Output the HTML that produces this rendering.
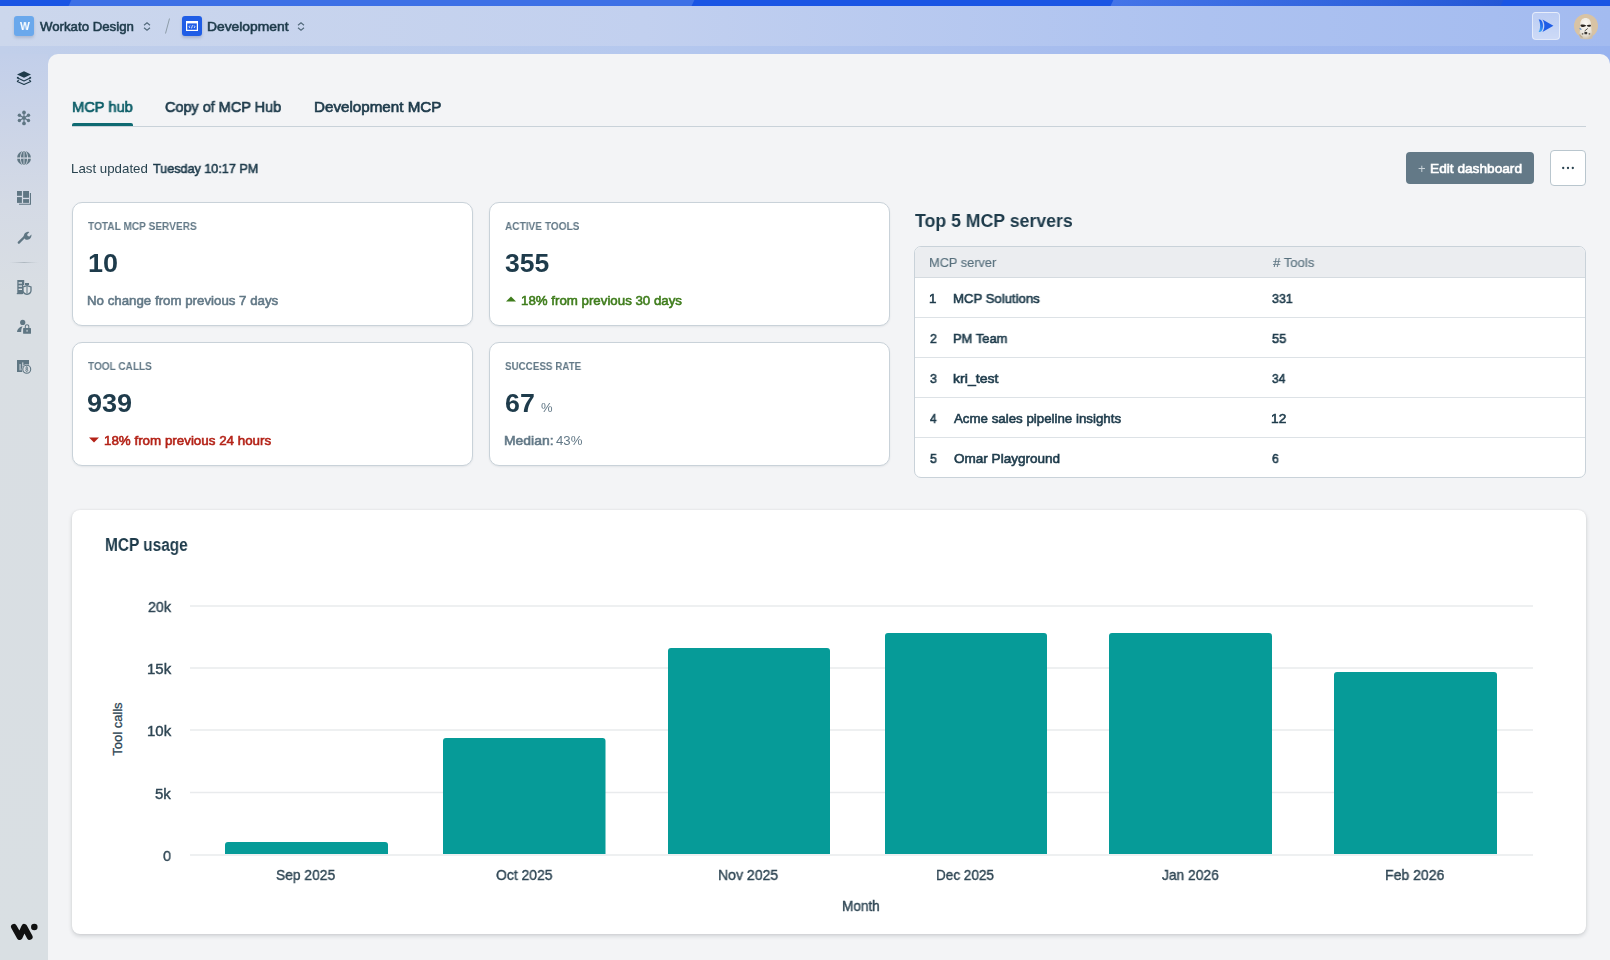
<!DOCTYPE html>
<html><head><meta charset="utf-8">
<style>
*{box-sizing:border-box;margin:0;padding:0}
html,body{width:1610px;height:960px;overflow:hidden}
body{position:relative;font-family:"Liberation Sans",sans-serif;color:#1e3b4b;
background:linear-gradient(180deg,#c3d0ea 0px,#cdd6e6 250px,#d9dfe3 450px,#d9dfe3 960px)}
.t{position:absolute;line-height:1;white-space:nowrap;transform-origin:0 0;will-change:transform}
.b{font-weight:700}
#topbar{position:absolute;left:0;top:0;width:1610px;height:6px;background:#1a55e4;overflow:hidden}
#topbar i{position:absolute;top:0;height:6px;display:block;transform:skewX(-25deg)}
#hdr{position:absolute;left:0;top:6px;width:1610px;height:48px;
background:linear-gradient(90deg,#ccd7ec 0%,#c2d0ef 40%,#adc2f0 75%,#a3bbf0 100%)}
#hdr2{position:absolute;left:0;top:46px;width:1610px;height:30px;
background:linear-gradient(90deg,#c1cfea 0%,#b5c8ee 40%,#a2b9ee 75%,#98b3ef 100%)}
#side{position:absolute;left:0;top:54px;width:48px;height:906px;background:linear-gradient(180deg,#c2cfea 0px,#cbd4e7 70px,#d4dae5 150px,#d9dee3 240px,#d9dfe3 906px)}
#main{position:absolute;left:48px;top:54px;width:1562px;height:906px;background:#f3f4f6;border-radius:10px 10px 0 0}
.card{position:absolute;background:#fff;border:1px solid #c9d2d9;border-radius:10px;box-shadow:0 1px 2px rgba(30,50,70,.08)}
.lbl{font-size:11px;font-weight:700;color:#637987;letter-spacing:0}
.big{font-size:26px;font-weight:700;color:#1e3b4b}
.sub{font-size:13.4px;font-weight:700;color:#637987}
</style></head><body>
<div id="topbar">
  <i style="left:70px;width:623px;background:#3d70e6"></i>
  <i style="left:1112px;width:390px;background:linear-gradient(90deg,#4474e8,#2f62dc 70%,#2457d6)"></i>
</div>
<div id="hdr"></div>
<div id="hdr2"></div>
<div id="side"></div>
<div id="main"></div>

<!-- header breadcrumb -->
<div style="position:absolute;left:14px;top:16px;width:20px;height:20px;border-radius:3px;background:#6aa8ec;box-shadow:0 2px 3px rgba(30,50,90,.18)"></div>
<svg style="position:absolute;left:143px;top:22px" width="8" height="9" viewBox="0 0 8 9"><path d="M1 3.2 4 0.8 7 3.2M1 5.8 4 8.2 7 5.8" fill="none" stroke="#51687a" stroke-width="1.1"/></svg>
<svg style="position:absolute;left:164px;top:18px" width="7" height="16" viewBox="0 0 7 16"><path d="M5.5 0.5 1.5 15.5" stroke="#8d9ca8" stroke-width="1"/></svg>
<div style="position:absolute;left:182px;top:16px;width:20px;height:20px;border-radius:3px;background:#1f5de6;box-shadow:0 2px 3px rgba(30,50,90,.2)"></div>
<svg style="position:absolute;left:186px;top:21px" width="12" height="10" viewBox="0 0 12 10"><rect x="0.6" y="0.6" width="10.8" height="8.8" fill="none" stroke="#fff" stroke-width="1.2"/><rect x="0" y="0" width="12" height="2.4" fill="#fff"/><path d="M4 4.5 3 5.8 4 7M8 4.5 9 5.8 8 7M6.5 4.2 5.5 7.4" fill="none" stroke="#fff" stroke-width="0.8"/></svg>
<svg style="position:absolute;left:297px;top:22px" width="8" height="9" viewBox="0 0 8 9"><path d="M1 3.2 4 0.8 7 3.2M1 5.8 4 8.2 7 5.8" fill="none" stroke="#51687a" stroke-width="1.1"/></svg>

<!-- header right -->
<div style="position:absolute;left:1532px;top:12px;width:28px;height:28px;border-radius:4px;background:linear-gradient(180deg,rgba(255,255,255,.25),rgba(255,255,255,.45));border:1px solid rgba(255,255,255,.55)"></div>
<svg style="position:absolute;left:1536px;top:16px" width="20" height="20" viewBox="0 0 20 20">
 <defs><linearGradient id="g1" x1="0" y1="1" x2="0.3" y2="0"><stop offset="0" stop-color="#3fb0f7"/><stop offset="0.6" stop-color="#2a78ee"/><stop offset="1" stop-color="#1f5de6"/></linearGradient></defs>
 <path d="M2.6 3.6C4.2 3.6 4.9 3.9 5.4 4.4 6.6 5.8 7 7.8 7 9.8S6.6 13.8 5.4 15.3C4.9 15.8 4.2 16 2.6 16 3.6 14.4 4.1 12.2 4.1 9.8S3.6 5.2 2.6 3.6Z" fill="url(#g1)"/>
 <path d="M6.4 3.6 17.4 9.8 6.4 16C7.7 14.2 8.3 12.1 8.3 9.8S7.7 5.4 6.4 3.6Z" fill="#1f5de6"/>
</svg>

<!-- tabs -->
<div style="position:absolute;left:72px;top:126px;width:1514px;height:1px;background:#c9d2d9"></div>
<div style="position:absolute;left:72px;top:123px;width:61px;height:3px;border-radius:2px 2px 0 0;background:#0f6a72"></div>

<!-- last updated -->

<!-- buttons -->
<div style="position:absolute;left:1406px;top:152px;width:128px;height:32px;border-radius:4px;background:#637987"></div>
<div style="position:absolute;left:1550px;top:150px;width:36px;height:36px;border-radius:4px;background:#fff;border:1px solid #b9c6ce"></div>
<svg style="position:absolute;left:1561px;top:166px" width="14" height="4" viewBox="0 0 14 4"><circle cx="2.2" cy="2" r="1.15" fill="#2a4350"/><circle cx="7" cy="2" r="1.15" fill="#2a4350"/><circle cx="11.8" cy="2" r="1.15" fill="#2a4350"/></svg>

<!-- KPI cards -->
<div class="card" style="left:72px;top:202px;width:401px;height:124px"></div>
<div class="card" style="left:489px;top:202px;width:401px;height:124px"></div>
<div class="card" style="left:72px;top:342px;width:401px;height:124px"></div>
<div class="card" style="left:489px;top:342px;width:401px;height:124px"></div>


<!-- KPI content -->

<svg style="position:absolute;left:505px;top:295px" width="12" height="8" viewBox="0 0 12 8"><path d="M1 6.5 6 1.5 11 6.5Z" fill="#3f7d1c"/></svg>

<svg style="position:absolute;left:88px;top:436px" width="12" height="8" viewBox="0 0 12 8"><path d="M1 1.5 6 6.5 11 1.5Z" fill="#b42318"/></svg>


<!-- Top 5 -->
<div style="position:absolute;left:914px;top:246px;width:672px;height:232px;border:1px solid #c9d2d9;border-radius:7px;background:#fff;overflow:hidden">
  <div style="position:absolute;left:0;top:0;width:100%;height:31px;background:#ebedf0;border-bottom:1px solid #d5dbe0"></div>
  <div style="position:absolute;left:0;top:70px;width:100%;height:1px;background:#dde2e6"></div>
  <div style="position:absolute;left:0;top:110px;width:100%;height:1px;background:#dde2e6"></div>
  <div style="position:absolute;left:0;top:150px;width:100%;height:1px;background:#dde2e6"></div>
  <div style="position:absolute;left:0;top:190px;width:100%;height:1px;background:#dde2e6"></div>
</div>

<!-- chart card -->
<div style="position:absolute;left:72px;top:510px;width:1514px;height:424px;border-radius:8px;background:#fff;box-shadow:0 2px 4px rgba(20,30,40,.16),0 0 2px rgba(20,30,40,.08)"></div>
<svg style="position:absolute;left:0;top:0" width="1610" height="960" viewBox="0 0 1610 960">
 <g stroke="#e9ebed" stroke-width="1.6">
  <line x1="190" y1="606" x2="1533" y2="606"/>
  <line x1="190" y1="668" x2="1533" y2="668"/>
  <line x1="190" y1="730" x2="1533" y2="730"/>
  <line x1="190" y1="792.5" x2="1533" y2="792.5"/>
  <line x1="190" y1="855" x2="1533" y2="855"/>
 </g>
 <g fill="#069b98">
  <path d="M225 854V845Q225 842 228 842H385Q388 842 388 845V854Z"/>
  <path d="M443 854V741Q443 738 446 738H602.5Q605.5 738 605.5 741V854Z"/>
  <path d="M668 854V651Q668 648 671 648H827Q830 648 830 651V854Z"/>
  <path d="M885 854V636Q885 633 888 633H1044Q1047 633 1047 636V854Z"/>
  <path d="M1109 854V636Q1109 633 1112 633H1269Q1272 633 1272 636V854Z"/>
  <path d="M1334 854V675Q1334 672 1337 672H1494Q1497 672 1497 675V854Z"/>
 </g>
</svg>


<!-- sidebar icons -->
<svg style="position:absolute;left:0;top:60px" width="48" height="330" viewBox="0 60 48 330">
 <path d="M24 71.2 31 74.5 24 77.7 17 74.5Z" fill="#1e3b4b"/>
 <g fill="#1e3b4b"><rect x="16.9" y="76.9" width="1.7" height="1.7"/><rect x="29.4" y="76.9" width="1.7" height="1.7"/></g>
 <g fill="none" stroke="#1e3b4b" stroke-width="1.1" stroke-linejoin="round">
  <path d="M17.8 78 24 80.9 30.2 78"/>
  <path d="M18.8 79.8 17.3 81.4 24 84.5 30.7 81.4 29.2 79.8"/>
 </g>
 <g fill="#5f7683" stroke="#5f7683" stroke-width="1.1">
  <path d="M24 112.4V123.4M19.4 115.25 28.5 120.5M19.4 120.5 28.5 115.25" />
  <circle cx="24" cy="117.9" r="1.9" stroke="none"/>
  <circle cx="24" cy="112.4" r="1.85" stroke="none"/><circle cx="24" cy="123.4" r="1.85" stroke="none"/>
  <circle cx="19.4" cy="115.25" r="1.7" stroke="none"/><circle cx="28.5" cy="115.25" r="1.7" stroke="none"/>
  <circle cx="19.4" cy="120.5" r="1.7" stroke="none"/><circle cx="28.5" cy="120.5" r="1.7" stroke="none"/>
 </g>
 <circle cx="24" cy="158" r="7" fill="#5f7683"/>
 <g fill="none" stroke="#d5dbe5">
  <ellipse cx="24" cy="158" rx="3.6" ry="7.4" stroke-width="0.9"/>
  <path d="M16.5 158.1H31.5" stroke-width="1.3"/>
 </g>
 <path d="M24 151.6V164.4" stroke="#b4bfca" stroke-width="1.2"/>
 <g fill="#5f7683">
  <rect x="17" y="191" width="4.9" height="4.8"/>
  <rect x="23.1" y="191" width="5.9" height="6.8"/>
  <rect x="17" y="197.1" width="4.9" height="5.8"/>
  <rect x="23.1" y="199.1" width="5.9" height="3.8"/>
  <path d="M29.9 193H31V204.8H19V203.8H29.9Z"/>
 </g>
 <g fill="none" stroke="#5f7683" stroke-linecap="round">
  <path d="M18.8 242.6 25.2 236.2" stroke-width="2.3"/>
  <path d="M24.4 237.2A3.6 3.6 0 1 1 29.2 232.2L27.3 234.1 27.8 235.7 29.4 236.2 31 234.4" stroke-width="0" />
 </g>
 <path fill="#5f7683" d="M23.9 237.6C23.2 235.3 24.6 232.3 27.3 231.9C28 231.8 28.7 231.9 29.3 232.2L27.2 234.3 27.6 236.1 29.4 236.5 31.4 234.4C31.8 236.9 30 239.4 27.5 239.7C26.7 239.8 26 239.7 25.4 239.4Z"/>
 <defs><linearGradient id="dv" gradientUnits="userSpaceOnUse" x1="9" y1="0" x2="39" y2="0"><stop offset="0" stop-color="#c0c8cf" stop-opacity="0"/><stop offset="0.5" stop-color="#adb7bf"/><stop offset="1" stop-color="#c0c8cf" stop-opacity="0"/></linearGradient></defs><path d="M9 262.5H39" stroke="url(#dv)" stroke-width="1"/>
 <g fill="#5f7683">
  <path d="M17.3 280H24.2V285.3H23V294H17.3Z"/>
  <path d="M16.8 293H22.5V294.2H16.8Z"/>
  <path d="M25 283H29V285H25Z"/>
 </g>
 <g fill="#dde2e6"><rect x="18.6" y="282.2" width="3.4" height="1.4"/><rect x="18.6" y="285.4" width="3.4" height="1.4"/><rect x="18.6" y="288.6" width="3.4" height="1.4"/></g>
 <path d="M27 285.6 31 287V290.4C31 292.4 29.3 293.8 27 294.4C24.7 293.8 23 292.4 23 290.4V287Z" fill="#dde2e6" stroke="#5f7683" stroke-width="1.3"/>
 <path d="M27 286.4V293.6" stroke="#5f7683" stroke-width="1"/>
 <g fill="#5f7683">
  <circle cx="22.7" cy="322.4" r="2.6"/>
  <path d="M17 332C17.2 329.2 19 327 22.6 326.2 21.6 327.8 21.2 329.6 21.2 332Z"/>
  <rect x="23.1" y="328" width="7.9" height="5.8" rx="0.6"/>
 </g>
 <path d="M25.3 328.4V326.4A1.75 1.75 0 0 1 28.8 326.4V328.4" fill="none" stroke="#5f7683" stroke-width="1.05"/>
 <rect x="26.5" y="329.8" width="1.1" height="1.9" fill="#d6dce2"/>
 <g fill="#5f7683"><rect x="17" y="360" width="12" height="12"/></g>
 <g fill="#b9c3cb"><rect x="19.4" y="364" width="1.4" height="6.4"/><rect x="22" y="362.4" width="1.4" height="4"/></g>
 <circle cx="26.75" cy="369.25" r="5.1" fill="#d8dde2"/>
 <circle cx="26.75" cy="369.25" r="3.95" fill="none" stroke="#5f7683" stroke-width="1.1"/>
 <g fill="none" stroke="#5f7683" stroke-width="0.85"><circle cx="26.75" cy="368.1" r="0.95"/><circle cx="26.75" cy="370.3" r="1.05"/><path d="M26.75 366.3V367M26.75 371.5V372.2"/></g>
</svg>
<!-- workato logo -->
<svg style="position:absolute;left:0;top:910px" width="48" height="40" viewBox="0 910 48 40">
 <path d="M13.96 926.9 19.65 937 24.26 926.9 29.7 937" fill="none" stroke="#111" stroke-width="5.9" stroke-linecap="round" stroke-linejoin="round"/>
 <circle cx="34.3" cy="926.9" r="3.25" fill="#111"/>
</svg>
<!-- avatar -->
<svg style="position:absolute;left:1574px;top:14px" width="24" height="26" viewBox="0 0 24 26">
 <defs><clipPath id="avc"><path d="M0 12A12 12 0 0 1 24 12V26H0Z"/></clipPath>
 <radialGradient id="hel" cx="0.45" cy="0.3" r="0.7"><stop offset="0" stop-color="#fbfaf7"/><stop offset="0.7" stop-color="#e9e4da"/><stop offset="1" stop-color="#cdbfa8"/></radialGradient></defs>
 <circle cx="12" cy="12" r="12" fill="#d8c3a4"/>
 <g clip-path="url(#avc)">
  <path d="M6.2 10.5C6.2 6 8.6 4 11.6 4S17 6 17 10.5L17.6 16.5C18.6 19 19.2 21.5 18.2 24.5 16 25.6 9 25.6 6 24.5 4.8 21.5 5.2 19 6 16.5Z" fill="url(#hel)"/>
  <path d="M6.3 11C8.5 10.2 10.4 10.4 12.2 11.6 10.8 13.4 8.6 13.3 7 12.4ZM17 11C15.4 10.4 13.8 10.6 12.6 11.6 13.6 13 15.6 13.2 16.8 12.2Z" fill="#2a2622"/>
  <path d="M13.8 14.4 10.6 17" stroke="#4a4640" stroke-width="0.9"/>
  <path d="M5.6 14.2 7.4 15.6" stroke="#5d8fc8" stroke-width="1.2"/>
  <path d="M10.2 18.6C11 17.6 12.6 17.6 13.4 18.6L13 20.2H10.6Z" fill="#3c3834"/>
  <circle cx="8.6" cy="19.8" r="0.9" fill="#6d655a"/><circle cx="15.4" cy="19.8" r="0.9" fill="#6d655a"/>
  <path d="M5.5 20.5C6.5 22 7.5 23 8.5 23.5" stroke="#b9a88e" stroke-width="1.2" fill="none"/>
 </g>
</svg>
<div id="toolcalls" style="position:absolute;left:90.75px;top:722.8px;width:54px;height:14px;line-height:14px;text-align:center;font-size:13.6px;white-space:nowrap;color:#2f4654;-webkit-text-stroke:0.3px #2f4654;transform:rotate(-90deg) scaleX(0.955);transform-origin:50% 50%">Tool calls</div>

<div class="t" style="left:20.2px;top:21.07px;font-size:11.5px;font-weight:700;color:#fff;transform:scaleX(0.9);">W</div>
<div class="t" style="left:40.2px;top:19.8px;font-size:13px;font-weight:400;color:#1e3b4b;transform:scaleX(1.0174);-webkit-text-stroke:0.58px #1e3b4b">Workato Design</div>
<div class="t" style="left:207.4px;top:19.8px;font-size:13px;font-weight:400;color:#1e3b4b;transform:scaleX(1.064);-webkit-text-stroke:0.58px #1e3b4b">Development</div>
<div class="t" style="left:71.6px;top:98.93px;font-size:15.2px;font-weight:400;color:#0b5d67;transform:scaleX(0.9646);-webkit-text-stroke:0.68px #0b5d67">MCP hub</div>
<div class="t" style="left:165.4px;top:98.93px;font-size:15.2px;font-weight:400;color:#1e3b4b;transform:scaleX(0.9508);-webkit-text-stroke:0.68px #1e3b4b">Copy of MCP Hub</div>
<div class="t" style="left:314.0px;top:98.93px;font-size:15.2px;font-weight:400;color:#1e3b4b;-webkit-text-stroke:0.68px #1e3b4b">Development MCP</div>
<div class="t" style="left:71.2px;top:161.63px;font-size:13.2px;font-weight:400;color:#29434f;transform:scaleX(1.008);">Last updated</div>
<div class="t" style="left:153.0px;top:161.63px;font-size:13.2px;font-weight:400;color:#1e3b4b;transform:scaleX(0.9545);-webkit-text-stroke:0.59px #1e3b4b">Tuesday 10:17 PM</div>
<div class="t" style="left:1417.6px;top:161.8px;font-size:13px;font-weight:400;color:#c9d3d9;">+</div>
<div class="t" style="left:1429.6px;top:162.37px;font-size:13.5px;font-weight:400;color:#fff;transform:scaleX(1.0134);-webkit-text-stroke:0.61px #fff">Edit dashboard</div>
<div class="t" style="left:88.0px;top:220.52px;font-size:11.2px;font-weight:700;color:#637987;transform:scaleX(0.9042);">TOTAL MCP SERVERS</div>
<div class="t" style="left:87.6px;top:251.21px;font-size:25.5px;font-weight:700;color:#1e3b4b;transform:scaleX(1.058);">10</div>
<div class="t" style="left:87.0px;top:293.83px;font-size:13.2px;font-weight:400;color:#637987;transform:scaleX(1.0074);-webkit-text-stroke:0.59px #637987">No change from previous 7 days</div>
<div class="t" style="left:505.0px;top:220.52px;font-size:11.2px;font-weight:700;color:#637987;transform:scaleX(0.9024);">ACTIVE TOOLS</div>
<div class="t" style="left:504.8px;top:251.21px;font-size:25.5px;font-weight:700;color:#1e3b4b;transform:scaleX(1.0409);">355</div>
<div class="t" style="left:520.6px;top:293.83px;font-size:13.2px;font-weight:400;color:#3f7d1c;transform:scaleX(1.0076);-webkit-text-stroke:0.59px #3f7d1c">18% from previous 30 days</div>
<div class="t" style="left:87.8px;top:360.52px;font-size:11.2px;font-weight:700;color:#637987;transform:scaleX(0.8987);">TOOL CALLS</div>
<div class="t" style="left:86.8px;top:391.21px;font-size:25.5px;font-weight:700;color:#1e3b4b;transform:scaleX(1.0611);">939</div>
<div class="t" style="left:103.6px;top:433.83px;font-size:13.2px;font-weight:400;color:#b42318;transform:scaleX(1.0134);-webkit-text-stroke:0.59px #b42318">18% from previous 24 hours</div>
<div class="t" style="left:505.0px;top:360.52px;font-size:11.2px;font-weight:700;color:#637987;transform:scaleX(0.8781);">SUCCESS RATE</div>
<div class="t" style="left:504.8px;top:391.21px;font-size:25.5px;font-weight:700;color:#1e3b4b;transform:scaleX(1.051);">67</div>
<div class="t" style="left:541.0px;top:401.0px;font-size:13px;font-weight:400;color:#637987;">%</div>
<div class="t" style="left:504.0px;top:433.83px;font-size:13.2px;font-weight:400;color:#637987;transform:scaleX(1.0557);-webkit-text-stroke:0.59px #637987">Median:</div>
<div class="t" style="left:556.0px;top:433.83px;font-size:13.2px;font-weight:400;color:#637987;transform:scaleX(0.9848);">43%</div>
<div class="t" style="left:914.8px;top:211.74px;font-size:18.5px;font-weight:700;color:#1e3b4b;transform:scaleX(0.9573);">Top 5 MCP servers</div>
<div class="t" style="left:929.2px;top:255.66px;font-size:13.4px;font-weight:400;color:#58707d;transform:scaleX(0.9543);-webkit-text-stroke:0.15px #58707d">MCP server</div>
<div class="t" style="left:1273.0px;top:255.66px;font-size:13.4px;font-weight:400;color:#58707d;transform:scaleX(0.9811);-webkit-text-stroke:0.15px #58707d"># Tools</div>
<div class="t" style="left:929.0px;top:291.74px;font-size:13.3px;font-weight:400;color:#1e3b4b;-webkit-text-stroke:0.6px #1e3b4b">1</div>
<div class="t" style="left:953.2px;top:291.74px;font-size:13.3px;font-weight:400;color:#1e3b4b;transform:scaleX(0.9897);-webkit-text-stroke:0.6px #1e3b4b">MCP Solutions</div>
<div class="t" style="left:1271.8px;top:291.74px;font-size:13.3px;font-weight:400;color:#1e3b4b;transform:scaleX(0.9324);-webkit-text-stroke:0.6px #1e3b4b">331</div>
<div class="t" style="left:930.0px;top:331.74px;font-size:13.3px;font-weight:400;color:#1e3b4b;transform:scaleX(0.9341);-webkit-text-stroke:0.6px #1e3b4b">2</div>
<div class="t" style="left:953.2px;top:331.74px;font-size:13.3px;font-weight:400;color:#1e3b4b;transform:scaleX(0.9746);-webkit-text-stroke:0.6px #1e3b4b">PM Team</div>
<div class="t" style="left:1271.8px;top:331.74px;font-size:13.3px;font-weight:400;color:#1e3b4b;transform:scaleX(0.9578);-webkit-text-stroke:0.6px #1e3b4b">55</div>
<div class="t" style="left:930.0px;top:371.74px;font-size:13.3px;font-weight:400;color:#1e3b4b;transform:scaleX(0.9341);-webkit-text-stroke:0.6px #1e3b4b">3</div>
<div class="t" style="left:953.2px;top:371.74px;font-size:13.3px;font-weight:400;color:#1e3b4b;transform:scaleX(1.0605);-webkit-text-stroke:0.6px #1e3b4b">kri_test</div>
<div class="t" style="left:1271.8px;top:371.74px;font-size:13.3px;font-weight:400;color:#1e3b4b;transform:scaleX(0.8939);-webkit-text-stroke:0.6px #1e3b4b">34</div>
<div class="t" style="left:930.0px;top:411.74px;font-size:13.3px;font-weight:400;color:#1e3b4b;transform:scaleX(0.9);-webkit-text-stroke:0.6px #1e3b4b">4</div>
<div class="t" style="left:954.2px;top:411.74px;font-size:13.3px;font-weight:400;color:#1e3b4b;-webkit-text-stroke:0.6px #1e3b4b">Acme sales pipeline insights</div>
<div class="t" style="left:1270.8px;top:411.74px;font-size:13.3px;font-weight:400;color:#1e3b4b;transform:scaleX(1.0314);-webkit-text-stroke:0.6px #1e3b4b">12</div>
<div class="t" style="left:930.0px;top:451.74px;font-size:13.3px;font-weight:400;color:#1e3b4b;transform:scaleX(0.9341);-webkit-text-stroke:0.6px #1e3b4b">5</div>
<div class="t" style="left:954.2px;top:451.74px;font-size:13.3px;font-weight:400;color:#1e3b4b;transform:scaleX(1.0185);-webkit-text-stroke:0.6px #1e3b4b">Omar Playground</div>
<div class="t" style="left:1271.8px;top:451.74px;font-size:13.3px;font-weight:400;color:#1e3b4b;transform:scaleX(0.9167);-webkit-text-stroke:0.6px #1e3b4b">6</div>
<div class="t" style="left:104.6px;top:535.71px;font-size:18.3px;font-weight:700;color:#1e3b4b;transform:scaleX(0.8428);">MCP usage</div>
<div class="t" style="left:147.6px;top:598.5px;font-size:15px;font-weight:400;color:#2f4654;transform:scaleX(0.9508);-webkit-text-stroke:0.4px #2f4654">20k</div>
<div class="t" style="left:147.2px;top:660.5px;font-size:15px;font-weight:400;color:#2f4654;transform:scaleX(0.9836);-webkit-text-stroke:0.4px #2f4654">15k</div>
<div class="t" style="left:147.2px;top:722.5px;font-size:15px;font-weight:400;color:#2f4654;transform:scaleX(0.9836);-webkit-text-stroke:0.4px #2f4654">10k</div>
<div class="t" style="left:155.0px;top:785.5px;font-size:15px;font-weight:400;color:#2f4654;-webkit-text-stroke:0.4px #2f4654">5k</div>
<div class="t" style="left:163.2px;top:847.5px;font-size:15px;font-weight:400;color:#2f4654;transform:scaleX(0.9572);-webkit-text-stroke:0.4px #2f4654">0</div>
<div class="t" style="left:276.0px;top:867.3px;font-size:15px;font-weight:400;color:#2f4654;transform:scaleX(0.9206);-webkit-text-stroke:0.4px #2f4654">Sep 2025</div>
<div class="t" style="left:496.2px;top:867.3px;font-size:15px;font-weight:400;color:#2f4654;transform:scaleX(0.9286);-webkit-text-stroke:0.4px #2f4654">Oct 2025</div>
<div class="t" style="left:718.2px;top:867.3px;font-size:15px;font-weight:400;color:#2f4654;transform:scaleX(0.9382);-webkit-text-stroke:0.4px #2f4654">Nov 2025</div>
<div class="t" style="left:936.4px;top:867.3px;font-size:15px;font-weight:400;color:#2f4654;transform:scaleX(0.9034);-webkit-text-stroke:0.4px #2f4654">Dec 2025</div>
<div class="t" style="left:1162.0px;top:867.3px;font-size:15px;font-weight:400;color:#2f4654;transform:scaleX(0.9196);-webkit-text-stroke:0.4px #2f4654">Jan 2026</div>
<div class="t" style="left:1385.0px;top:867.3px;font-size:15px;font-weight:400;color:#2f4654;transform:scaleX(0.9368);-webkit-text-stroke:0.4px #2f4654">Feb 2026</div>
<div class="t" style="left:841.8px;top:899.35px;font-size:14px;font-weight:400;color:#2f4654;transform:scaleX(0.9705);-webkit-text-stroke:0.4px #2f4654">Month</div>
</body></html>
